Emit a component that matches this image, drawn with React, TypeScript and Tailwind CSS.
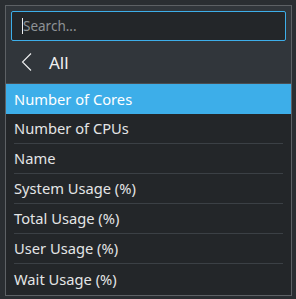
import React from 'react';

const items = [
  'Number of Cores',
  'Number of CPUs',
  'Name',
  'System Usage (%)',
  'Total Usage (%)',
  'User Usage (%)',
  'Wait Usage (%)',
];

const App: React.FC = () => {
  return (
    <div
      className="w-[296px] h-[299px] bg-[#2a2e32] pt-[5px] pl-[5px] overflow-hidden"
      style={{ fontFamily: '"Noto Sans", sans-serif' }}
    >
      <div className="w-[287px] h-[291px] border border-[#5d6165] bg-[#31363b] flex flex-col">
        {/* Search */}
        <div className="px-[5px] pt-[5px]">
          <div className="h-[30px] w-[275px] rounded-[2px] border border-[#3daee9] bg-[#232629] flex items-center pl-[10px]">
            <span className="w-px h-[16px] bg-[#eff0f1]" />
            <span className="text-[13.5px] text-[#8e9296]">Search...</span>
          </div>
        </div>

        {/* Back row */}
        <div className="h-[43px] flex items-center pl-[15px] gap-[17px] border-b border-[#4a4f54]">
          <svg width="11" height="18" viewBox="0 0 11 18" className="text-[#eff0f1]">
            <path d="M10 0.5 L1.5 9 L10 17.5" fill="none" stroke="currentColor" strokeWidth="1.1" />
          </svg>
          <span className="text-[17px] text-[#eff0f1] leading-none">All</span>
        </div>

        {/* List */}
        <div className="flex-1 bg-[#232629] flex flex-col">
          {items.map((label, idx) => (
            <div
              key={label}
              className={
                idx === 0
                  ? 'h-[30px] bg-[#3daee9] text-white flex items-center pl-[8px] text-[14.7px]'
                  : 'h-[30px] flex flex-col'
              }
            >
              {idx === 0 ? (
                label
              ) : (
                <>
                  <div className="flex-1 flex items-center pl-[8px] text-[14.7px] text-[#e4e5e6]">{label}</div>
                  {idx < items.length - 1 && <div className="h-px mx-[8px] bg-[#3b4045]" />}
                </>
              )}
            </div>
          ))}
        </div>
      </div>
    </div>
  );
};

export default App;
